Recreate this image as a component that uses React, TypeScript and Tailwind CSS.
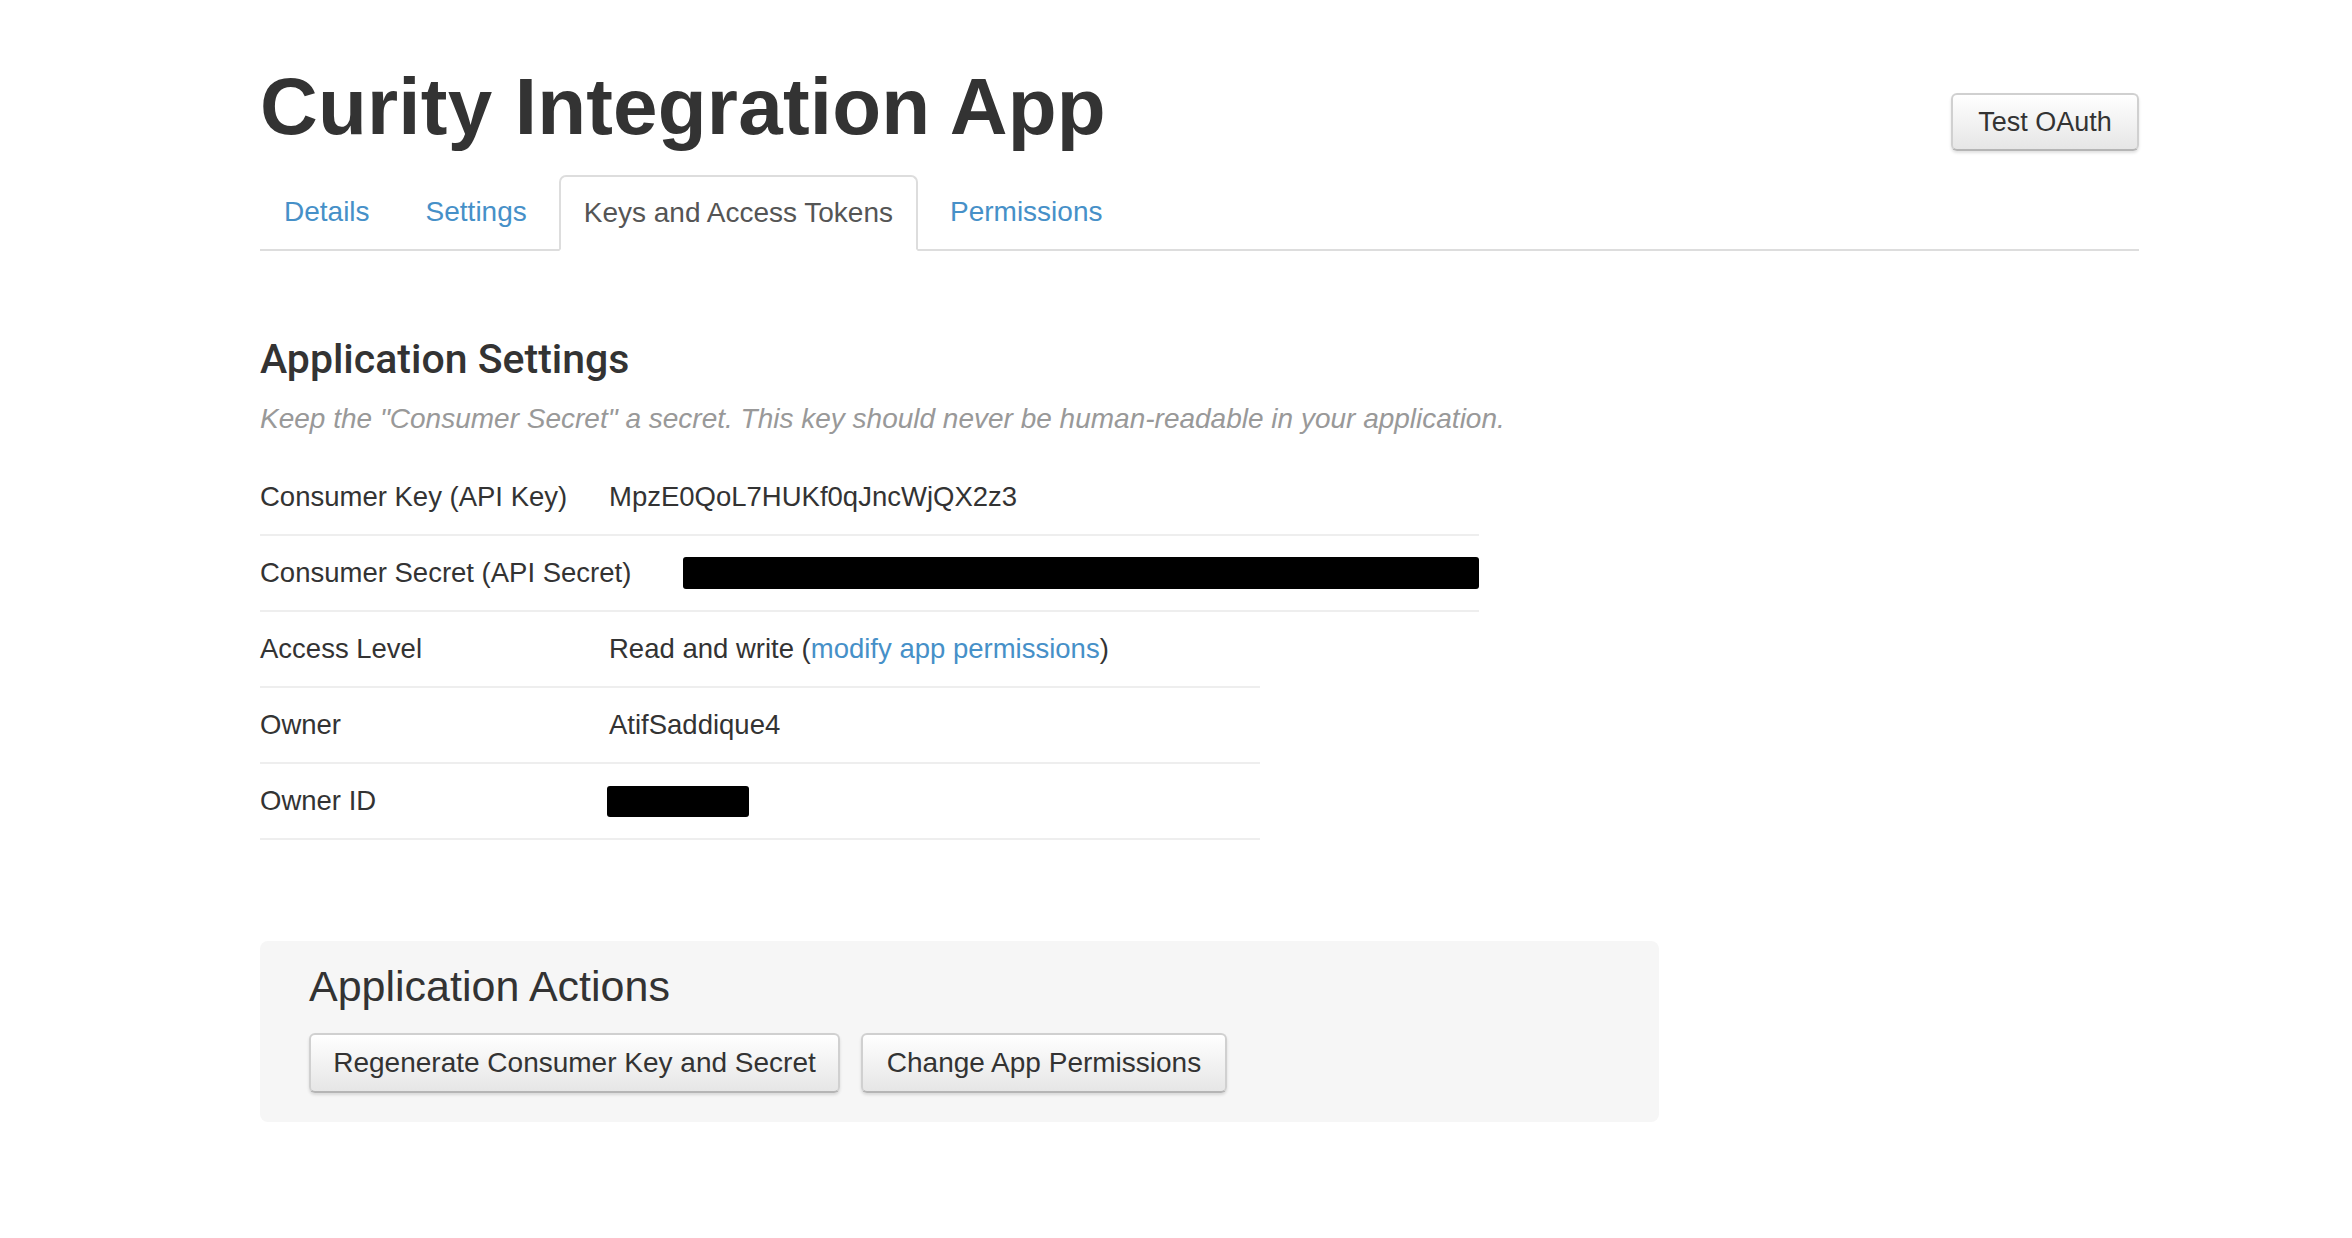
import React from 'react';

const tabs = [
  { label: 'Details', active: false },
  { label: 'Settings', active: false },
  { label: 'Keys and Access Tokens', active: true },
  { label: 'Permissions', active: false },
];

const btn =
  'flex items-center justify-center rounded-[6px] border-2 border-[#d0d0d0] border-b-[#b5b5b5] bg-gradient-to-b from-white to-[#e6e6e6] text-[#333] shadow-[0_2px_3px_rgba(0,0,0,0.12)]';

export default function App() {
  return (
    <div className="min-h-screen bg-white text-[#333] font-['Liberation_Sans',Arial,sans-serif]">
      <div className="ml-[260px] w-[1879px] pt-[67px] pb-[117px]">
        {/* Header */}
        <div className="flex items-start justify-between">
          <h1 className="text-[80px] font-bold leading-[80px] tracking-[0.2px] text-[#333]">
            Curity Integration App
          </h1>
          <button className={`${btn} mt-[26px] h-[58px] w-[188px] text-[27px]`}>Test OAuth</button>
        </div>

        {/* Tabs */}
        <ul className="mt-[24px] flex border-b-2 border-[#ddd]">
          {tabs.map((t) =>
            t.active ? (
              <li
                key={t.label}
                className="-mb-[2px] mr-[8px] flex h-[76px] items-center rounded-t-[7px] border-2 border-[#ddd] border-b-white bg-white px-[23px] text-[28px] text-[#555]"
              >
                {t.label}
              </li>
            ) : (
              <li
                key={t.label}
                className="mr-[8px] flex h-[74px] items-center px-[24px] text-[28px] text-[#4690c8]"
              >
                {t.label}
              </li>
            )
          )}
        </ul>

        {/* Application Settings */}
        <h2 className="mt-[84px] font-['Roboto',sans-serif] text-[41px] font-medium leading-[48px] text-[#333]">
          Application Settings
        </h2>
        <p className="mt-[18px] text-[28px] italic leading-[36px] text-[#999]">
          Keep the "Consumer Secret" a secret. This key should never be human-readable in your
          application.
        </p>

        <div className="mt-[23px] w-[1219px] text-[27.5px]">
          <div className="flex h-[76px] items-center border-b-2 border-[#eee]">
            <div className="w-[349px] shrink-0 whitespace-nowrap">Consumer Key (API Key)</div>
            <div>MpzE0QoL7HUKf0qJncWjQX2z3</div>
          </div>
          <div className="flex h-[76px] items-center border-b-2 border-[#eee]">
            <div className="w-[423px] shrink-0 whitespace-nowrap">Consumer Secret (API Secret)</div>
            <div className="h-[32px] w-[796px] rounded-[3px] bg-black" />
          </div>
        </div>

        <div className="w-[1000px] text-[27.5px]">
          <div className="flex h-[76px] items-center border-b-2 border-[#eee]">
            <div className="w-[349px] shrink-0">Access Level</div>
            <div>
              Read and write (<a className="text-[#4690c8]">modify app permissions</a>)
            </div>
          </div>
          <div className="flex h-[76px] items-center border-b-2 border-[#eee]">
            <div className="w-[349px] shrink-0">Owner</div>
            <div>AtifSaddique4</div>
          </div>
          <div className="flex h-[76px] items-center border-b-2 border-[#eee]">
            <div className="w-[347px] shrink-0">Owner ID</div>
            <div className="h-[31px] w-[142px] rounded-[3px] bg-black" />
          </div>
        </div>

        {/* Application Actions */}
        <div className="mt-[101px] h-[181px] w-[1399px] rounded-[8px] bg-[#f6f6f6] px-[49px] pt-[20px]">
          <h3 className="text-[43px] leading-[50px] text-[#333]">Application Actions</h3>
          <div className="mt-[22px] flex gap-[21px]">
            <button className={`${btn} h-[60px] w-[531px] text-[28px]`}>
              Regenerate Consumer Key and Secret
            </button>
            <button className={`${btn} h-[60px] w-[366px] text-[28px]`}>Change App Permissions</button>
          </div>
        </div>
      </div>
    </div>
  );
}
